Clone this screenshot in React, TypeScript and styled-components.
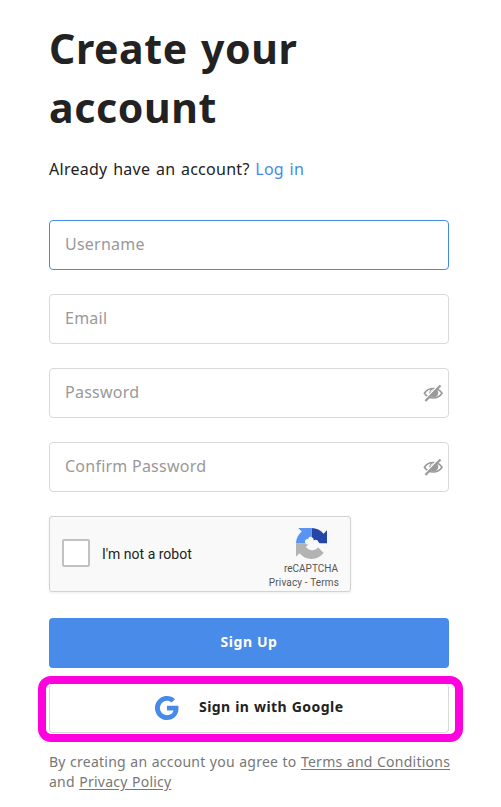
import React from "react";
import styled, { createGlobalStyle } from "styled-components";

const GlobalStyle = createGlobalStyle`
  *, *::before, *::after { box-sizing: border-box; }
  body { margin: 0; background: #fff; color: #222; font-family: "Noto Sans", sans-serif; }
`;

const Page = styled.main`
  width: 501px;
  height: 807px;
  padding: 19px 0 0 49px;
  overflow: hidden;
`;
const Content = styled.div`
  width: 400px;
  display: flex;
  flex-direction: column;
`;
const Title = styled.h1`
  margin: 0 0 20px;
  font-size: 41px;
  line-height: 59px;
  font-weight: 700;
  letter-spacing: 0.6px;
  word-spacing: 2px;
`;
const Prompt = styled.p`
  margin: 0 0 39px;
  font-size: 16px;
  line-height: 24px;
  letter-spacing: 0.27px;
  word-spacing: 1.2px;
  white-space: nowrap;
`;
const Link = styled.a`
  color: #478be9;
  text-decoration: none;
`;
const Fields = styled.form`
  display: flex;
  flex-direction: column;
  gap: 24px;
`;
const Field = styled.label<{ $active?: boolean }>`
  height: 50px;
  display: flex;
  align-items: center;
  padding: 0 5px 0 15px;
  border: 1px solid ${(p) => (p.$active ? "#478be9" : "#d9d9d9")};
  border-radius: 4px;
`;
const Input = styled.input`
  flex: 1;
  min-width: 0;
  height: 46px;
  padding: 0 0 2px;
  border: 0;
  outline: 0;
  background: transparent;
  font: 16px "Noto Sans", sans-serif;
  letter-spacing: 0.24px;
  color: #222;
  &::placeholder { color: #999; opacity: 1; }
`;
const Captcha = styled.section`
  width: 302px;
  height: 76px;
  margin: 24px 0 26px;
  padding: 0 11px 0 12px;
  display: flex;
  align-items: center;
  border: 1px solid #d3d3d3;
  border-radius: 3px;
  background: #f9f9f9;
  box-shadow: 0 1px 3px rgba(0, 0, 0, 0.08);
  font-family: Roboto, sans-serif;
`;
const CheckBox = styled.span`
  width: 28px;
  height: 28px;
  margin-bottom: 2px;
  border: 2px solid #c1c1c1;
  border-radius: 2px;
  background: #fff;
`;
const CaptchaLabel = styled.span`
  flex: 1;
  padding-left: 12px;
  font-size: 14px;
  line-height: 17px;
  color: #222;
`;
const CaptchaBrand = styled.div`
  width: 72px;
  padding-top: 9px;
  display: flex;
  flex-direction: column;
  align-items: flex-end;
  color: #555;
`;
const BrandMark = styled.svg`
  width: 31px;
  height: 31px;
  margin: 0 12px 3px 0;
`;
const BrandText = styled.span<{ $inset: number; $tracking?: number }>`
  margin-right: ${(p) => p.$inset}px;
  font-size: 10px;
  line-height: 14px;
  letter-spacing: ${(p) => p.$tracking ?? 0}px;
  white-space: nowrap;
`;
const SignUpButton = styled.button`
  height: 50px;
  margin-bottom: 8px;
  padding: 0 0 3px;
  border: 0;
  border-radius: 4px;
  background: #498be9;
  color: #fff;
  font: 700 14px "Noto Sans", sans-serif;
  letter-spacing: 0.6px;
`;
const Highlight = styled.div`
  width: 425px;
  height: 66px;
  margin: 0 0 10px -11px;
  border: 8px solid #ff00de;
  border-radius: 13px;
  padding: 0 6px 1px 3px;
  display: flex;
`;
const GoogleButton = styled.button`
  flex: 1;
  display: flex;
  align-items: center;
  padding: 0 0 0 105px;
  border: 1px solid #d9d9d9;
  border-top: 0;
  border-radius: 4px;
  background: #fff;
  color: #222;
  font: 700 14px "Noto Sans", sans-serif;
  letter-spacing: 0.45px;
  word-spacing: 0.5px;
`;
const GoogleMark = styled.svg`
  width: 24px;
  height: 24px;
  margin-right: 20px;
`;
const ButtonText = styled.span`
  padding-bottom: 4px;
`;
const Legal = styled.p`
  margin: 0;
  color: #777;
  font-size: 14px;
  line-height: 20px;
  letter-spacing: 0.24px;
  word-spacing: 0.5px;
  white-space: nowrap;
  a { color: inherit; text-decoration: underline; text-underline-offset: 2px; }
`;
const EyeSvg = styled.svg`
  width: 20px;
  height: 18px;
`;

const HiddenEye = () => (
  <EyeSvg viewBox="0 0 20 18" fill="none">
    <path d="M1.4 9.2C3.4 6.2 6.4 4.5 10.2 4.5s6.8 1.7 8.8 4.7c-2 3.1-5 4.8-8.8 4.8s-6.8-1.7-8.8-4.8Z" stroke="#999" strokeWidth="1.6" />
    <circle cx="10.8" cy="8.7" r="4.5" fill="#999" />
    <path d="M7.8 8c.2-1.3 1-2 2.2-2.2" stroke="#fff" />
    <path d="M1.2 16.2 15.9.8" stroke="#fff" strokeWidth="1.6" />
    <path d="M2.4 17 17.5 1.4" stroke="#999" strokeWidth="2.2" />
  </EyeSvg>
);

const RecaptchaMark = () => (
  <BrandMark viewBox="0 0 64 64">
    <path fill="#2545a8" d="M64 32V4.687l-7.16 7.16C50.948 4.674 42.033.093 32.05.093V32Z" />
    <path fill="#5a94f0" d="M32.05.094H4.594l7.16 7.16C4.58 13.147 0 22.06 0 32.046h32.05Z" />
    <path fill="#b3b3b3" d="M0 32v27.313l7.16-7.16c5.86 7.173 14.774 11.754 24.76 11.754 10.4 0 19.622-4.96 25.458-12.64L44 38 36 32Z" />
    <path fill="#f9f9f9" d="M64 32 57.4 51.3 45.7 39.4c-2 3.5-6 6.2-11 6.6-6 .4-11-2.2-14.2-6.6l5-5.2c-4-.3-7-2.2-7-6 0-4 3-6 7-5-1-4 3-6 6.5-4.7 4 1.5 5 4.5 4 7.5 4-3 9-2 10 2.5L48.8 32Z" />
  </BrandMark>
);

export default function App() {
  return (
    <>
      <GlobalStyle />
      <Page>
        <Content>
          <Title>Create your<br />account</Title>
          <Prompt>Already have an account? <Link>Log in</Link></Prompt>
          <Fields>
            <Field $active><Input placeholder="Username" /></Field>
            <Field><Input placeholder="Email" /></Field>
            <Field><Input type="password" placeholder="Password" /><HiddenEye /></Field>
            <Field><Input type="password" placeholder="Confirm Password" /><HiddenEye /></Field>
          </Fields>
          <Captcha>
            <CheckBox />
            <CaptchaLabel>I'm not a robot</CaptchaLabel>
            <CaptchaBrand>
              <RecaptchaMark />
              <BrandText $inset={1}>reCAPTCHA</BrandText>
              <BrandText $inset={0} $tracking={0.15}>Privacy - Terms</BrandText>
            </CaptchaBrand>
          </Captcha>
          <SignUpButton>Sign Up</SignUpButton>
          <Highlight>
            <GoogleButton>
              <GoogleMark viewBox="2 2 44 44">
                <path
                  fill="#478be9"
                  d="M45.12 24.5c0-1.56-.14-3.06-.4-4.5H24v8.51h11.84c-.51 2.75-2.06 5.08-4.39 6.64C29.48 36.5 27 37.25 24 37.25c-5.73 0-10.58-3.87-12.31-9.07C11.25 26.86 11 25.45 11 24s.25-2.86.69-4.18C13.42 14.62 18.27 10.75 24 10.75c3.23 0 6.13 1.11 8.41 3.29l6.31-6.31C34.91 4.18 29.93 2 24 2 15.4 2 7.96 6.93 4.34 14.12a22 22 0 0 0 0 19.76C7.96 41.07 15.4 46 24 46c5.94 0 10.92-1.97 14.56-5.33 4.16-3.83 6.56-9.47 6.56-16.17Z"
                />
              </GoogleMark>
              <ButtonText>Sign in with Google</ButtonText>
            </GoogleButton>
          </Highlight>
          <Legal>
            By creating an account you agree to <a>Terms and Conditions</a>
            <br />and <a>Privacy Policy</a>
          </Legal>
        </Content>
      </Page>
    </>
  );
}
